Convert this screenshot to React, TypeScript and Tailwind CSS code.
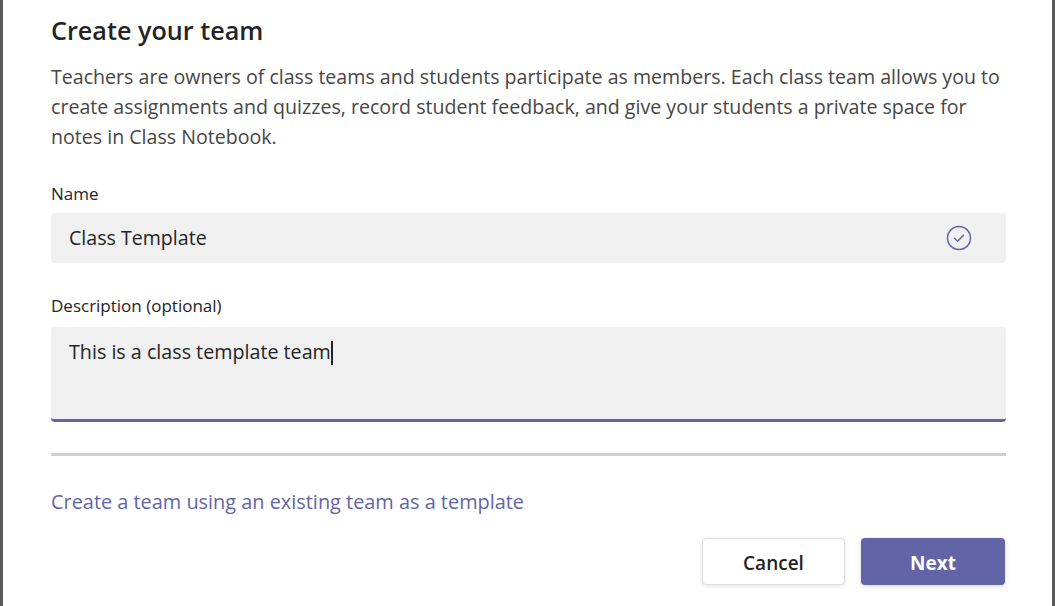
import React from "react";

export default function App() {
  const font = { fontFamily: '"Open Sans", "Noto Sans", sans-serif' };
  return (
    <div className="w-full h-[606px] bg-[#5b5b5b] flex px-[3px] overflow-hidden" style={font}>
      <div className="flex-1 bg-white pl-[48px] pr-[46px] flex flex-col">
        <h1 className="pt-[14px] text-[25.2px] leading-[32px] font-semibold text-[#252424]">Create your team</h1>
        <p className="mt-[16px] text-[19.6px] leading-[30px] text-[#484644] whitespace-nowrap">
          Teachers are owners of class teams and students participate as members. Each class team allows you to
          <br />
          create assignments and quizzes, record student feedback, and give your students a private space for
          <br />
          notes in Class Notebook.
        </p>
        <div className="mt-[31px] text-[17px] leading-[22px] text-[#252424]">Name</div>
        <div className="mt-[8px] h-[50px] rounded-[4px] bg-[#f0f0f0] flex items-center pl-[18px] pr-[34px]">
          <span className="flex-1 text-[19.6px] text-[#252424]">Class Template</span>
          <svg width="26" height="26" viewBox="0 0 26 26" fill="none">
            <circle cx="13" cy="13" r="11.5" stroke="#6264a7" strokeWidth="1.5" />
            <path d="M8.5 13.2 L11.6 16.2 L17.5 10.2" stroke="#6264a7" strokeWidth="1.5" strokeLinecap="round" strokeLinejoin="round" />
          </svg>
        </div>
        <div className="mt-[32px] text-[17px] leading-[22px] text-[#252424]">Description (optional)</div>
        <div className="mt-[10px] h-[95px] rounded-[4px] bg-[#f0f0f0] border-b-[3px] border-[#6264a7] pl-[18px] pt-[13px]">
          <span className="text-[19.7px] leading-[24px] text-[#252424]">This is a class template team</span>
          <span className="inline-block w-[2px] h-[24px] bg-[#252424] align-middle -mt-[3px]"></span>
        </div>
        <div className="mt-[31px] h-[3px] bg-[#d1d1d1]"></div>
        <div className="mt-[32px] text-[19.9px] leading-[28px] text-[#6264a7]">Create a team using an existing team as a template</div>
        <div className="mt-[22px] flex justify-end gap-[16px] pr-[1px]">
          <button className="w-[143px] h-[47px] pt-[3px] rounded-[4px] bg-white border border-[#e1dfdd] shadow-[0_1px_4px_rgba(0,0,0,0.12)] text-[19px] font-semibold text-[#252424]">
            Cancel
          </button>
          <button className="w-[144px] h-[47px] pt-[3px] rounded-[4px] bg-[#6264a7] shadow-[0_1px_4px_rgba(0,0,0,0.18)] text-[19px] font-bold text-white">
            Next
          </button>
        </div>
      </div>
    </div>
  );
}
